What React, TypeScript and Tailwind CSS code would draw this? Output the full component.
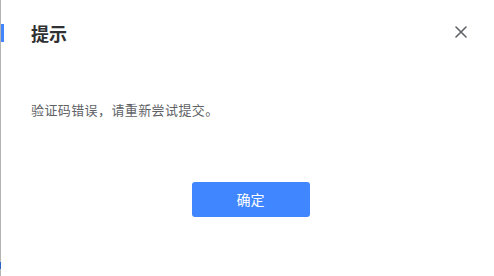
import React from "react";

export default function App() {
  return (
    <div
      className="relative flex h-[276px] w-[494px] bg-white"
      style={{ fontFamily: '"Noto Sans CJK SC", "Noto Sans", sans-serif' }}
    >
      <div className="relative h-full w-[1px] bg-[#b4b4b4]">
        <div className="absolute left-[1px] top-[24px] h-[18px] w-[3px] bg-[#4185ff]" />
        <div className="absolute left-0 top-[262px] h-[7px] w-[1px] bg-[#2a62c8]" />
      </div>
      <div className="flex flex-1 flex-col pl-[30px] pr-[24px]">
        <div className="flex h-[24px] items-center justify-between mt-[21px]">
          <div className="text-[18px] font-bold leading-[24px] text-[#303133]">提示</div>
          <svg width="12" height="12" viewBox="0 0 12 12" className="mb-[3px] mr-[3px]">
            <path d="M1 1L11 11M11 1L1 11" stroke="#5f6368" strokeWidth="1.6" strokeLinecap="round" />
          </svg>
        </div>
        <div className="mt-[55px] text-[13px] leading-[20px] tracking-[0.4px] text-[#606266]">
          验证码错误，请重新尝试提交。
        </div>
        <div className="mt-[62px] flex justify-center">
          <button className="h-[35px] w-[118px] rounded-[3px] bg-[#4086ff] text-[14px] text-white">
            确定
          </button>
        </div>
      </div>
    </div>
  );
}
